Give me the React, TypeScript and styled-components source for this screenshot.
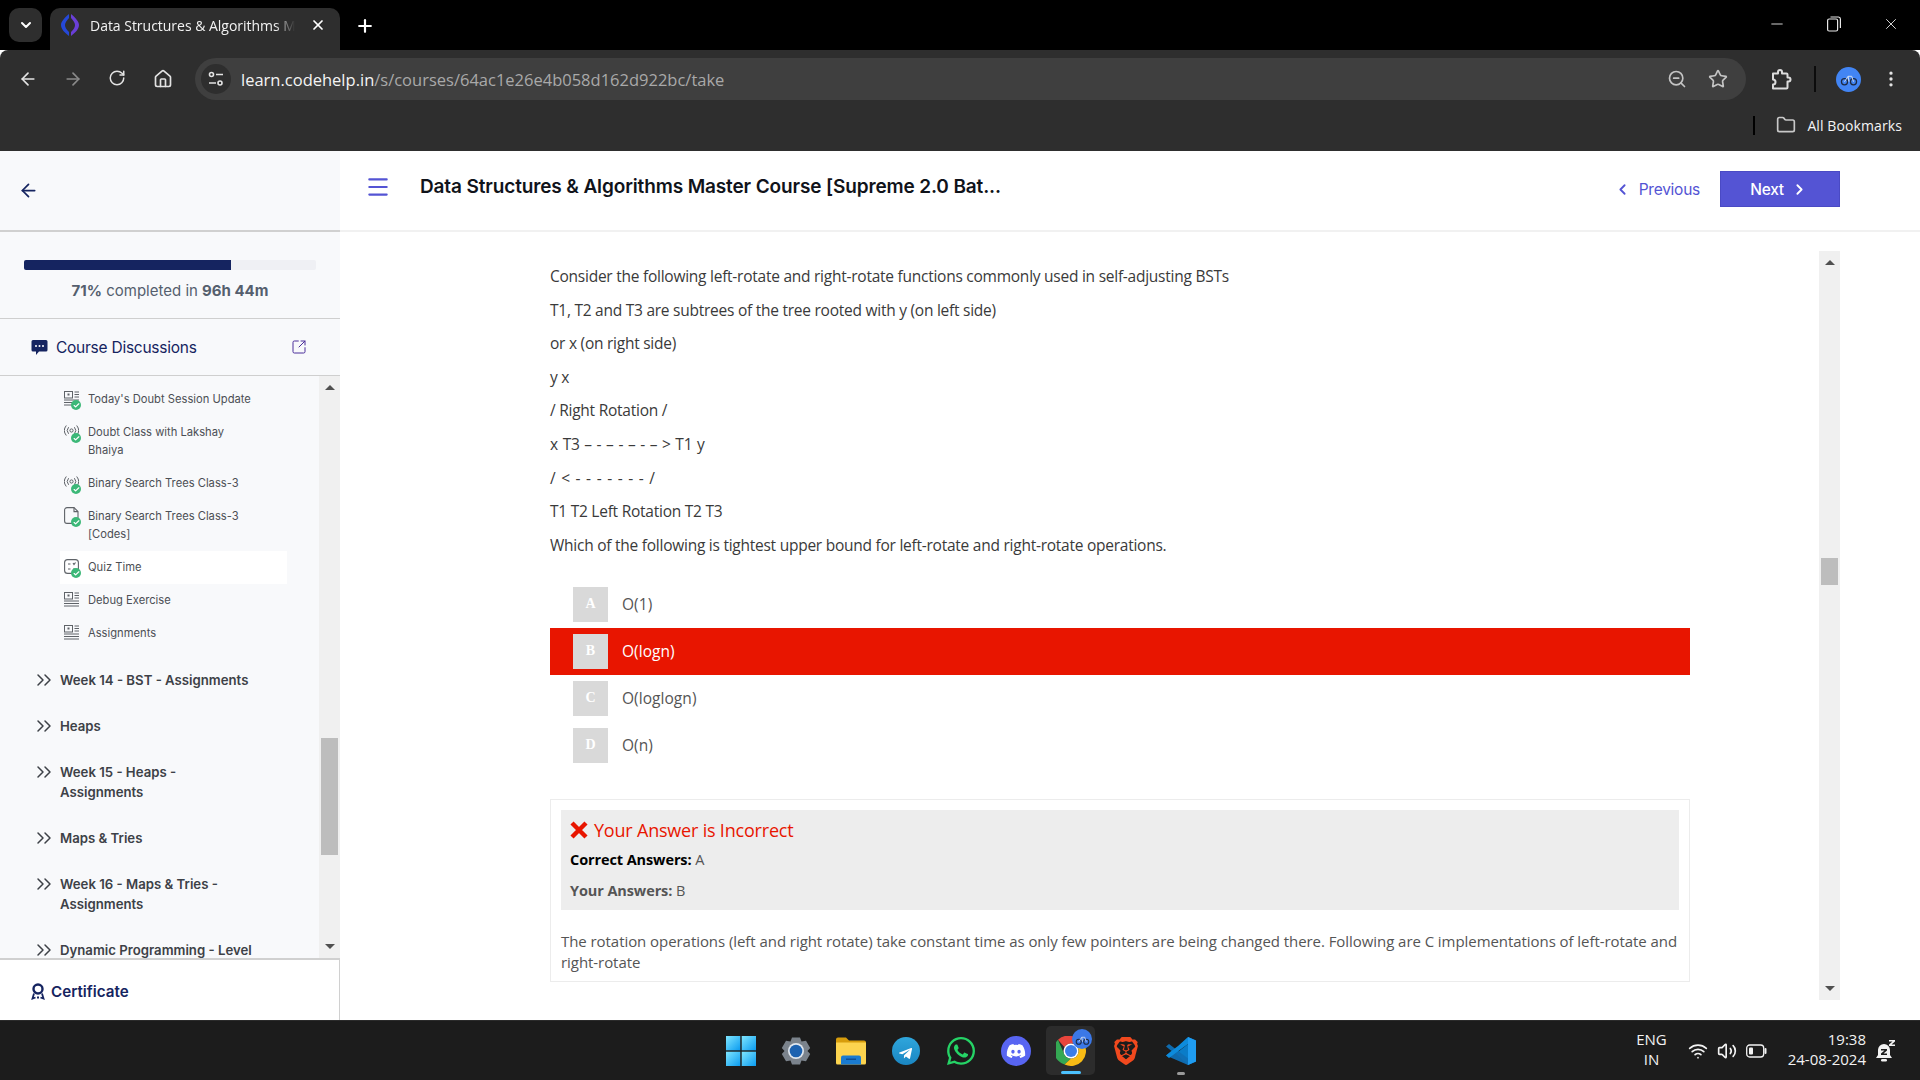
import React, { FC } from "react";
import styled, { createGlobalStyle } from "styled-components";
import { FaDiscord, FaWhatsapp, FaTelegramPlane } from "react-icons/fa";
import { SiBrave } from "react-icons/si";
import {
  ArrowLeft,
  ArrowRight,
  RotateCw,
  Home,
  ZoomOut,
  Star,
  MoreVertical,
  Folder,
  Plus,
  X,
  Minus,
  ChevronDown,
  ChevronLeft,
  ChevronRight,
  ChevronsRight,
  Menu,
  SquareArrowOutUpRight,
  Wifi,
  Volume2,
  Check,
} from "lucide-react";

const SITE_FONT = `Inter, "Liberation Sans", sans-serif`;
const UI_FONT = `"Open Sans", "Noto Sans", sans-serif`;
const NAVY = "#152460";
const PURPLE = "#5454d4";

const GlobalStyle = createGlobalStyle`
  html, body {
    margin: 0;
    padding: 0;
    width: 1920px;
    height: 1080px;
    overflow: hidden;
    background: #fff;
  }
  * { box-sizing: border-box; }
`;

const Page = styled.div`
  width: 1920px;
  height: 1080px;
  display: flex;
  flex-direction: column;
  font-family: ${UI_FONT};
`;

/* browser chrome */
const TabStrip = styled.div`
  height: 50px;
  background: #000;
  display: flex;
  align-items: flex-start;
  padding: 8px 0 0 9px;
  color: #fff;
`;

const TabMenu = styled.div`
  width: 33px;
  height: 34px;
  border-radius: 10px;
  background: #2e2e2e;
  display: flex;
  align-items: center;
  justify-content: center;
`;

const Tab = styled.div`
  margin-left: 8px;
  width: 290px;
  height: 42px;
  background: #2e2e2e;
  border-radius: 10px 10px 0 0;
  display: flex;
  align-items: center;
  padding: 0 10px 8px 10px;
`;

const TabTitle = styled.div`
  margin-left: 10px;
  width: 220px;
  font-size: 14px;
  white-space: nowrap;
  letter-spacing: -0.02px;
  color: #f2f2f2;
  mask-image: linear-gradient(to right, #000 185px, transparent 205px);
`;

const TabClose = styled.div`
  display: flex;
`;

const NewTab = styled.div`
  margin: 8px 0 0 15px;
  display: flex;
`;

const WindowControls = styled.div`
  margin: 7px 20px 0 auto;
  display: flex;
  gap: 39px;
  color: #e8e8e8;
`;

const RestoreGlyph = styled.div`
  width: 18px;
  height: 18px;
  display: flex;
  align-items: center;
  justify-content: center;
`;

const Toolbar = styled.div`
  height: 55px;
  background: #2e2e2e;
  display: flex;
  align-items: center;
  padding: 3px 12px 0 18px;
  color: #e3e3e3;
  border-radius: 8px 8px 0 0;
`;

const NavButton = styled.div<{ dim?: boolean }>`
  width: 20px;
  height: 20px;
  margin-right: 25px;
  display: flex;
  color: ${(props) => (props.dim ? "#8a8a8a" : "#e3e3e3")};
`;

const Omnibox = styled.div`
  width: 1551px;
  height: 42px;
  margin-left: -3px;
  border-radius: 21px;
  background: #3f3f3f;
  display: flex;
  align-items: center;
  padding: 0 18px 0 6px;
`;

const SiteChip = styled.div`
  width: 30px;
  height: 30px;
  border-radius: 50%;
  background: #2e2e2e;
  display: flex;
  align-items: center;
  justify-content: center;
`;

const UrlText = styled.div`
  margin-left: 10px;
  font-size: 16.5px;
  color: #a9a9a9;
  white-space: nowrap;
`;

const UrlHost = styled.span`
  color: #f4f4f4;
`;

const OmniActions = styled.div`
  margin-left: auto;
  display: flex;
  align-items: center;
  gap: 21px;
  color: #c4c4c4;
`;

const ToolActions = styled.div`
  margin-left: 22px;
  display: flex;
  align-items: center;
`;

const ToolDivider = styled.div`
  width: 2px;
  height: 26px;
  background: #0c0c0c;
  margin: 0 20px 0 22px;
`;

const Avatar = styled.div`
  width: 25px;
  height: 25px;
  border-radius: 50%;
  background: #4285f4;
  display: flex;
  align-items: center;
  justify-content: center;
  margin-right: 20px;
`;

const BookmarksBar = styled.div`
  height: 46px;
  background: #2e2e2e;
  display: flex;
  align-items: flex-start;
  justify-content: flex-end;
  padding: 4px 18px 0 0;
  color: #f4f4f4;
  font-size: 14px;
  letter-spacing: 0.1px;
`;

const BookmarkDivider = styled.div`
  width: 2px;
  height: 19px;
  background: #000;
  margin: 7px 21px 0 0;
`;

const BookmarkLabel = styled.div`
  display: flex;
  align-items: center;
  gap: 11px;
  height: 32px;
`;

/* page */
const AppBody = styled.div`
  flex: 1;
  min-height: 0;
  display: flex;
  background: #fff;
`;

const Sidebar = styled.aside`
  width: 340px;
  background: #f8f9fb;
  display: flex;
  flex-direction: column;
  font-family: ${SITE_FONT};
`;

const SideTop = styled.div`
  height: 81px;
  border-bottom: 2px solid #d0d0d0;
  display: flex;
  align-items: center;
  padding: 0 0 0 18px;
  color: ${NAVY};
`;

const ProgressBlock = styled.div`
  height: 87px;
  padding: 28px 24px 0;
  border-bottom: 1px solid #cfcfcf;
`;

const ProgressTrack = styled.div`
  height: 10px;
  background: #eff0f4;
  border-radius: 2px;
  overflow: hidden;
`;

const ProgressFill = styled.div`
  height: 100%;
  background: ${NAVY};
`;

const ProgressText = styled.div`
  margin-top: 10px;
  text-align: center;
  font-size: 15px;
  line-height: 22px;
  color: #555f6e;
  b {
    font-weight: 700;
  }
`;

const DiscussionRow = styled.div`
  height: 57px;
  border-bottom: 1px solid #cfcfcf;
  display: flex;
  align-items: center;
  padding: 0 33px 0 31px;
  color: ${NAVY};
  font-size: 15.5px;
  letter-spacing: -0.25px;
`;

const DiscussionLabel = styled.span`
  margin-left: 8px;
  flex: 1;
`;

const ListArea = styled.div`
  flex: 1;
  min-height: 0;
  display: flex;
  overflow: hidden;
`;

const CourseList = styled.div`
  flex: 1;
  min-width: 0;
  padding-top: 6.5px;
  overflow: hidden;
`;

const LessonGroup = styled.div`
  margin-bottom: 7px;
`;

const LessonRow = styled.div<{ active?: boolean }>`
  display: flex;
  align-items: flex-start;
  width: 227px;
  margin-left: 60px;
  padding: 7.5px 12px 7.5px 4px;
  background: ${(props) => (props.active ? "#fff" : "transparent")};
`;

const LessonIcon = styled.div`
  position: relative;
  width: 15px;
  height: 18px;
  flex: none;
  color: #5f6368;
`;

const CheckBadge = styled.div`
  position: absolute;
  left: 7px;
  top: 10px;
  width: 10px;
  height: 10px;
  border-radius: 50%;
  background: #3cb878;
  color: #fff;
  display: flex;
  align-items: center;
  justify-content: center;
`;

const LessonText = styled.div`
  margin-left: 9px;
  width: 168px;
  font-size: 11.2px;
  line-height: 18px;
  color: #4c4f55;
`;

const SectionRow = styled.div`
  display: flex;
  align-items: flex-start;
  padding: 13px 0 13px 36px;
  color: #3d4147;
`;

const SectionChevron = styled.div`
  width: 16px;
  height: 20px;
  flex: none;
  display: flex;
  align-items: center;
  margin-left: -4px;
  margin-right: 4px;
  svg {
    flex: none;
  }
`;

const SectionText = styled.div`
  margin-left: 8px;
  width: 196px;
  font-size: 13.2px;
  line-height: 20px;
  font-weight: 600;
`;

const ScrollTrack = styled.div`
  width: 21px;
  margin-left: auto;
  background: #f0f0f0;
  display: flex;
  flex-direction: column;
  align-items: center;
  flex: none;
  padding: 9px 0 9px;
`;

const ScrollArrow = styled.div<{ down?: boolean }>`
  width: 0;
  height: 0;
  border-left: 5px solid transparent;
  border-right: 5px solid transparent;
  ${(props) =>
    props.down
      ? "border-top: 5px solid #505050; margin-top: auto;"
      : "border-bottom: 5px solid #505050;"}
`;

const ScrollThumb = styled.div<{ offset: number; size: number }>`
  width: 17px;
  height: ${(props) => props.size}px;
  margin-top: ${(props) => props.offset}px;
  background: #bdbdbd;
`;

const CertificateRow = styled.div`
  height: 62px;
  background: #fff;
  border-top: 2px solid #d0d0d0;
  border-right: 1px solid #d0d0d0;
  display: flex;
  align-items: center;
  gap: 6px;
  padding: 2px 0 0 31px;
  color: ${NAVY};
  font-size: 15.2px;
  font-weight: 600;
`;

const Main = styled.main`
  flex: 1;
  min-width: 0;
  display: flex;
  flex-direction: column;
`;

const MainHeader = styled.header`
  height: 81px;
  border-bottom: 2px solid #f1f1f1;
  display: flex;
  align-items: center;
  padding: 0 80px 3px 25px;
  font-family: ${SITE_FONT};
`;

const MenuButton = styled.div`
  width: 26px;
  height: 26px;
  display: flex;
  color: ${PURPLE};
  margin-top: -4px;
`;

const CourseTitle = styled.h1`
  margin: -5px 0 0 29px;
  font-size: 19px;
  font-weight: 600;
  letter-spacing: -0.13px;
  color: #10131a;
`;

const PrevLink = styled.div`
  margin-left: auto;
  display: flex;
  align-items: center;
  gap: 8px;
  font-size: 15.5px;
  color: ${PURPLE};
  letter-spacing: -0.25px;
`;

const NextButton = styled.div`
  margin-left: 20px;
  width: 120px;
  height: 36px;
  background: ${PURPLE};
  border: 1px solid #4a4ac4;
  color: #fff;
  font-size: 15.5px;
  font-weight: 500;
  display: flex;
  align-items: center;
  justify-content: center;
  gap: 7px;
  letter-spacing: -0.35px;
  padding-right: 2px;
`;

const ContentRow = styled.div`
  flex: 1;
  min-height: 0;
  display: flex;
  padding: 19px 80px 20px 210px;
`;

const QuestionColumn = styled.div`
  width: 1140px;
  padding-top: 13px;
`;

const QuestionLine = styled.p<{ spread?: number }>`
  margin: 0 0 9.6px;
  font-size: 15.5px;
  line-height: 24px;
  color: #3a3a3a;
  letter-spacing: -0.25px;
  word-spacing: ${(props) => props.spread || 0}px;
`;

const OptionList = styled.div`
  margin-top: 24px;
`;

const OptionRow = styled.div<{ wrong?: boolean }>`
  height: 47px;
  padding: 6px 23px;
  display: flex;
  align-items: center;
  gap: 14px;
  font-size: 15.5px;
  letter-spacing: 0.05px;
  background: ${(props) => (props.wrong ? "#e81500" : "transparent")};
  color: ${(props) => (props.wrong ? "#fff" : "#555")};
`;

const OptionBadge = styled.div`
  width: 35px;
  height: 35px;
  background: #d9d9d9;
  color: #fff;
  font-family: "Liberation Serif", serif;
  font-weight: 700;
  font-size: 14px;
  display: flex;
  align-items: center;
  justify-content: center;
`;

const FeedbackBox = styled.div`
  margin-top: 30px;
  height: 183px;
  border: 1px solid #ececec;
  padding: 10px;
`;

const VerdictPanel = styled.div`
  height: 100px;
  background: #ededed;
  padding: 8px 9px 0;
`;

const VerdictTitle = styled.div`
  display: flex;
  align-items: center;
  gap: 6px;
  height: 24px;
  font-size: 18px;
  letter-spacing: -0.2px;
  color: #e81500;
`;

const VerdictLine = styled.div<{ muted?: boolean }>`
  margin-top: ${(props) => (props.muted ? 8 : 6)}px;
  font-size: 14.5px;
  line-height: 23px;
  letter-spacing: -0.1px;
  color: ${(props) => (props.muted ? "#555" : "#000")};
  b {
    font-weight: 700;
  }
  span {
    color: #555;
  }
`;

const Explanation = styled.p`
  margin: 21px 0 0;
  font-size: 15px;
  line-height: 21px;
  letter-spacing: -0.06px;
  color: #555;
`;

/* taskbar */
const Taskbar = styled.footer`
  height: 60px;
  background: #1c1c1c;
  border-top: 1px solid #2b2b2b;
  display: flex;
  align-items: center;
  color: #f2f2f2;
`;

const TaskIcons = styled.div`
  margin-left: 716px;
  display: flex;
  align-items: center;
`;

const TaskSlot = styled.div<{ active?: boolean }>`
  position: relative;
  width: 49px;
  height: 49px;
  margin-right: 6px;
  border-radius: 5px;
  display: flex;
  align-items: center;
  justify-content: center;
  background: ${(props) => (props.active ? "#2c2c2c" : "transparent")};
`;

const RunningMark = styled.div<{ active?: boolean }>`
  position: absolute;
  bottom: ${(props) => (props.active ? "1px" : "0")};
  left: 50%;
  transform: translateX(-50%);
  width: ${(props) => (props.active ? "20px" : "8px")};
  height: 3px;
  border-radius: 2px;
  background: ${(props) => (props.active ? "#4cc2ff" : "#9a9a9a")};
`;

const ChromeBadge = styled.div`
  position: absolute;
  top: 3px;
  right: 3px;
  width: 20px;
  height: 20px;
  border-radius: 50%;
  background: #3b78e7;
  display: flex;
  align-items: center;
  justify-content: center;
`;

const Tray = styled.div`
  margin-left: auto;
  display: flex;
  align-items: center;
  font-size: 15px;
  padding: 0 24px 3px 0;
`;

const LangBlock = styled.div`
  text-align: center;
  line-height: 20px;
  margin-right: 21px;
`;

const TrayIcons = styled.div`
  display: flex;
  align-items: center;
  gap: 9px;
  margin-top: 3px;
`;

const ClockBlock = styled.div`
  margin-left: 21px;
  text-align: right;
  line-height: 20px;
`;

const BellWrap = styled.div`
  margin: 3px 0 0 10px;
  display: flex;
`;

const Favicon: FC = () => (
  <svg width="20" height="22" viewBox="0 0 20 22">
    <path d="M9 0 C4 4 1 8 1 11 C1 15 5 19 9 22 L9 18 C6 15 5 13 5 11 C5 9 7 6 9 4 Z" fill="#2548d8" />
    <path d="M11 0 C16 4 19 8 19 11 C19 15 15 19 11 22 L11 18 C14 15 15 13 15 11 C15 9 13 6 11 4 Z" fill="#6a3fd8" />
  </svg>
);

const TuneGlyph: FC = () => (
  <svg width="16" height="16" viewBox="0 0 16 16" fill="none" stroke="#e3e3e3" strokeWidth="1.600">
    <circle cx="3.500" cy="3.500" r="2" />
    <path d="M8 3.500H15M1 12H8" />
    <circle cx="12" cy="12" r="2" />
  </svg>
);

const ExtensionGlyph: FC = () => (
  <svg width="24" height="24" viewBox="0 0 24 24" fill="none" stroke="#dcdcdc" strokeWidth="2" strokeLinejoin="round">
    <path d="M5 6.500H10V5A2 2 0 0 1 14 5V6.500H18.500A1 1 0 0 1 19.500 7.500V10.500H20.500A2 2 0 0 1 20.500 14.500H19.500V20.500A1 1 0 0 1 18.500 21.500H5V17.500A2.500 2.500 0 0 0 5 12.500Z" />
  </svg>
);

const ChatGlyph: FC = () => (
  <svg width="17" height="17" viewBox="0 0 17 17">
    <path d="M2 1H15A1.500 1.500 0 0 1 16.500 2.500V11A1.500 1.500 0 0 1 15 12.500H8L5 16V12.500H2A1.500 1.500 0 0 1 .5 11V2.500A1.500 1.500 0 0 1 2 1Z" fill={NAVY} />
    <circle cx="5" cy="7" r="1" fill="#fff" />
    <circle cx="8.500" cy="7" r="1" fill="#fff" />
    <circle cx="12" cy="7" r="1" fill="#fff" />
  </svg>
);

const CertificateGlyph: FC = () => (
  <svg width="14" height="17" viewBox="0 0 14 17" fill="none" stroke={NAVY}>
    <circle cx="7" cy="6" r="4.500" strokeWidth="2.400" />
    <path d="M3 10.500L1.500 15.500L4.500 14.500M11 10.500L12.500 15.500L9.500 14.500M6 14.500H8" strokeWidth="1.800" />
  </svg>
);

const CrossGlyph: FC = () => (
  <svg width="18" height="18" viewBox="0 0 18 18" stroke="#e81500" strokeWidth="4.400">
    <path d="M2 2L16 16M16 2L2 16" />
  </svg>
);

const Bike: FC<{ size: number }> = ({ size }) => (
  <svg width={size} height={size} viewBox="0 0 20 20" fill="none" stroke="#1d2a44" strokeWidth="1.400">
    <circle cx="5" cy="13" r="3.400" />
    <circle cx="15" cy="13" r="3.400" />
    <path d="M5 13 L9 7 H13 L15 13 M9 7 L10 13" stroke="#dfe6f2" strokeWidth="1" />
  </svg>
);

const ArticleGlyph: FC = () => (
  <svg width="15" height="15" viewBox="0 0 15 15" fill="none" stroke="currentColor" strokeWidth="1">
    <rect x="0.500" y="0.500" width="8" height="6.500" />
    <rect x="3.500" y="2.500" width="2" height="2" fill="currentColor" stroke="none" />
    <path d="M10.500 1H15M10.500 3.500H15M10.500 6H15M0 9H15M0 11.500H15M0 14H15" />
  </svg>
);

const LiveGlyph: FC = () => (
  <svg width="15" height="15" viewBox="0 0 15 15" fill="none" stroke="currentColor" strokeWidth="1">
    <circle cx="7.500" cy="6.500" r="1.600" />
    <path d="M4.600 3.200a5 5 0 0 0 0 6.600M10.400 3.200a5 5 0 0 1 0 6.600M2.300 1.500a8 8 0 0 0 0 10M12.700 1.500a8 8 0 0 1 0 10" />
  </svg>
);

const FileGlyph: FC = () => (
  <svg width="15" height="18" viewBox="0 0 15 18" fill="none" stroke="currentColor" strokeWidth="1.100">
    <path d="M3 .6H10L14 4.600V14a2.400 2.400 0 0 1-2.400 2.400H3A2.400 2.400 0 0 1 .6 14V3A2.400 2.400 0 0 1 3 .6Z" />
    <path d="M10 .6V4.600H14" />
  </svg>
);

const QuizGlyph: FC = () => (
  <svg width="15" height="15" viewBox="0 0 15 15" fill="none" stroke="currentColor" strokeWidth="1.100">
    <rect x="0.600" y="0.600" width="13.800" height="13.800" rx="3" />
    <path d="M4 5H6.500M9 4L10 5.500L11.500 3.500M4 10H6.500M9 10H11.500" />
  </svg>
);

const WindowsLogo: FC = () => (
  <svg width="30" height="30" viewBox="0 0 30 30">
    <defs>
      <linearGradient id="win" x1="0" y1="0" x2="1" y2="1">
        <stop offset="0" stopColor="#7fe6ff" />
        <stop offset="1" stopColor="#0a9bf0" />
      </linearGradient>
    </defs>
    <rect x="0" y="0" width="14.300" height="14.300" fill="url(#win)" />
    <rect x="15.700" y="0" width="14.300" height="14.300" fill="url(#win)" />
    <rect x="0" y="15.700" width="14.300" height="14.300" fill="url(#win)" />
    <rect x="15.700" y="15.700" width="14.300" height="14.300" fill="url(#win)" />
  </svg>
);

const SettingsLogo: FC = () => (
  <svg width="30" height="30" viewBox="0 0 30 30">
    <path
      d="M11 1.500H19L20.500 5.500L25 4.800L29.200 12L26.500 15L29.200 18L25 25.200L20.500 24.500L19 28.500H11L9.500 24.500L5 25.200L.8 18L3.500 15L.8 12L5 4.800L9.500 5.500Z"
      fill="#7b838c"
    />
    <circle cx="15" cy="15" r="8" fill="#dfe6ee" />
    <circle cx="15" cy="15" r="6.300" fill="#1c62b0" />
  </svg>
);

const FolderLogo: FC = () => (
  <svg width="30" height="28" viewBox="0 0 30 28">
    <path d="M0 2.500A2 2 0 0 1 2 .5H10L13 3.500H28A2 2 0 0 1 30 5.500V12H0Z" fill="#d79d0c" />
    <path d="M0 5.500H30V26A1.500 1.500 0 0 1 28.500 27.500H1.500A1.500 1.500 0 0 1 0 26Z" fill="#fcd44f" />
    <path d="M5 20.500A2 2 0 0 1 7 18.500H23A2 2 0 0 1 25 20.500V27.500H5Z" fill="#1a7bd0" />
    <rect x="10" y="21.500" width="10" height="1.500" fill="#0d4f96" />
  </svg>
);

const TelegramLogo: FC = () => (
  <svg width="28" height="28" viewBox="0 0 28 28">
    <defs>
      <linearGradient id="tg" x1="0" y1="0" x2="0" y2="1">
        <stop offset="0" stopColor="#2fa6dc" />
        <stop offset="1" stopColor="#1a86c2" />
      </linearGradient>
    </defs>
    <circle cx="14" cy="14" r="14" fill="url(#tg)" />
    <foreignObject x="6" y="7" width="15" height="15">
      <FaTelegramPlane size={15} color="#fff" />
    </foreignObject>
  </svg>
);

const DiscordLogo: FC = () => (
  <svg width="30" height="30" viewBox="0 0 30 30">
    <circle cx="15" cy="15" r="15" fill="#5865f2" />
    <foreignObject x="5" y="5" width="20" height="20">
      <FaDiscord size={20} color="#fff" />
    </foreignObject>
  </svg>
);

const ChromeLogo: FC = () => (
  <svg width="30" height="30" viewBox="0 0 30 30">
    <path d="M15 0A15 15 0 0 1 28 7.500H15A7.500 7.500 0 0 0 8.500 11.250L2 3.750A15 15 0 0 1 15 0Z" fill="#e8453c" />
    <path d="M2 3.750L8.500 18.750A7.500 7.500 0 0 0 15 22.500L8.500 28.500A15 15 0 0 1 2 3.750Z" fill="#34a853" />
    <path d="M28 7.500A15 15 0 0 1 8.500 28.500L15 22.500A7.500 7.500 0 0 0 21.500 11.250Z" fill="#f9bc15" />
    <circle cx="15" cy="15" r="7.500" fill="#fff" />
    <circle cx="15" cy="15" r="6" fill="#3b7de8" />
  </svg>
);

const VsCodeLogo: FC = () => (
  <svg width="30" height="30" viewBox="0 0 30 30">
    <path d="M22 1L30 4.500V25.500L22 29L10 17.500L22 8Z" fill="#0a7cc8" />
    <path d="M22 1V29L30 25.500V4.500Z" fill="#1f9cf0" />
    <path d="M0 10.500L3 8L22 22.500V29L0 19.500L5.500 15Z" fill="#0f6fb5" opacity="0.95" />
    <path d="M0 19.500L3 22L22 8V1L12 10L5.500 15Z" fill="#0d8bdc" />
  </svg>
);

const BatteryGlyph: FC = () => (
  <svg width="21" height="14" viewBox="0 0 21 14" fill="none" stroke="#f2f2f2" strokeWidth="1.300">
    <rect x="0.700" y="1" width="17" height="12" rx="3" />
    <rect x="3" y="3.500" width="4" height="7" rx="1" fill="#f2f2f2" stroke="none" />
    <path d="M19.500 5V9" strokeWidth="2" strokeLinecap="round" />
  </svg>
);

const SnoozeBell: FC = () => (
  <svg width="20" height="24" viewBox="0 0 20 24" fill="#f2f2f2">
    <path d="M8 5A6 6 0 0 1 14 11V16L16 19H0L2 16V11A6 6 0 0 1 8 5Z" />
    <rect x="5" y="20" width="6" height="2.500" rx="1.200" />
    <path d="M5 10H11V11.500L7.500 14.500H11V16H5V14.500L8.500 11.500H5Z" fill="#1c1c1c" />
    <path d="M13 1H19V2.500L15.500 5.500H19V7H13V5.500L16.500 2.500H13Z" />
  </svg>
);

const Scrollbar: FC<{ offset: number; size: number }> = ({ offset, size }) => (
  <ScrollTrack>
    <ScrollArrow />
    <ScrollThumb offset={offset} size={size} />
    <ScrollArrow down />
  </ScrollTrack>
);

type Lesson = { icon: "article" | "live" | "file" | "quiz"; title: string; done?: boolean; active?: boolean };

const lessons: Lesson[] = [
  { icon: "article", title: "Today's Doubt Session Update", done: true },
  { icon: "live", title: "Doubt Class with Lakshay Bhaiya", done: true },
  { icon: "live", title: "Binary Search Trees Class-3", done: true },
  { icon: "file", title: "Binary Search Trees Class-3 [Codes]", done: true },
  { icon: "quiz", title: "Quiz Time", done: true, active: true },
  { icon: "article", title: "Debug Exercise" },
  { icon: "article", title: "Assignments" },
];

const sections = [
  "Week 14 - BST - Assignments",
  "Heaps",
  "Week 15 - Heaps - Assignments",
  "Maps & Tries",
  "Week 16 - Maps & Tries - Assignments",
  "Dynamic Programming - Level",
];

const questionLines: { text: string; spread?: number }[] = [
  { text: "Consider the following left-rotate and right-rotate functions commonly used in self-adjusting BSTs" },
  { text: "T1, T2 and T3 are subtrees of the tree rooted with y (on left side)" },
  { text: "or x (on right side)" },
  { text: "y x" },
  { text: "/ Right Rotation /" },
  { text: "x T3 – - – - – - – > T1 y", spread: 1 },
  { text: "/ < - - - - - - - /", spread: 2 },
  { text: "T1 T2 Left Rotation T2 T3" },
  { text: "Which of the following is tightest upper bound for left-rotate and right-rotate operations." },
];

const options = [
  { key: "A", text: "O(1)" },
  { key: "B", text: "O(logn)", wrong: true },
  { key: "C", text: "O(loglogn)" },
  { key: "D", text: "O(n)" },
];

const lessonGlyph = (icon: Lesson["icon"]) => {
  if (icon === "live") return <LiveGlyph />;
  if (icon === "file") return <FileGlyph />;
  if (icon === "quiz") return <QuizGlyph />;
  return <ArticleGlyph />;
};

const App: FC = () => {
  return (
    <Page>
      <GlobalStyle />
      <TabStrip>
        <TabMenu>
          <ChevronDown size={16} strokeWidth={3} />
        </TabMenu>
        <Tab>
          <Favicon />
          <TabTitle>Data Structures &amp; Algorithms M</TabTitle>
          <TabClose>
            <X size={16} strokeWidth={2.6} />
          </TabClose>
        </Tab>
        <NewTab>
          <Plus size={20} strokeWidth={2.6} />
        </NewTab>
        <WindowControls>
          <Minus size={18} strokeWidth={1.2} />
          <RestoreGlyph>
            <svg width="14" height="16" viewBox="0 0 14 16" fill="none" stroke="currentColor" strokeWidth="1.200">
              <rect x="0.600" y="3" width="10" height="12" rx="1.500" />
              <path d="M3.500 1H11.500A2 2 0 0 1 13.400 3V12" />
            </svg>
          </RestoreGlyph>
          <X size={18} strokeWidth={1.2} />
        </WindowControls>
      </TabStrip>

      <Toolbar>
        <NavButton>
          <ArrowLeft size={20} />
        </NavButton>
        <NavButton dim>
          <ArrowRight size={20} />
        </NavButton>
        <NavButton>
          <RotateCw size={18} />
        </NavButton>
        <NavButton>
          <Home size={20} />
        </NavButton>
        <Omnibox>
          <SiteChip>
            <TuneGlyph />
          </SiteChip>
          <UrlText>
            <UrlHost>learn.codehelp.in</UrlHost>/s/courses/64ac1e26e4b058d162d922bc/take
          </UrlText>
          <OmniActions>
            <ZoomOut size={20} />
            <Star size={20} />
          </OmniActions>
        </Omnibox>
        <ToolActions>
          <ExtensionGlyph />
          <ToolDivider />
          <Avatar>
            <Bike size={18} />
          </Avatar>
          <MoreVertical size={20} />
        </ToolActions>
      </Toolbar>

      <BookmarksBar>
        <BookmarkDivider />
        <BookmarkLabel>
          <Folder size={20} color="#c8c8c8" />
          All Bookmarks
        </BookmarkLabel>
      </BookmarksBar>

      <AppBody>
        <Sidebar>
          <SideTop>
            <ArrowLeft size={21} />
          </SideTop>
          <ProgressBlock>
            <ProgressTrack>
              <ProgressFill style={{ width: "71%" }} />
            </ProgressTrack>
            <ProgressText>
              <b>71%</b> completed in <b>96h 44m</b>
            </ProgressText>
          </ProgressBlock>
          <DiscussionRow>
            <ChatGlyph />
            <DiscussionLabel>Course Discussions</DiscussionLabel>
            <SquareArrowOutUpRight size={16} color="#4b2e9a" strokeWidth={1.5} />
          </DiscussionRow>
          <ListArea>
            <CourseList>
              <LessonGroup>
                {lessons.map((lesson) => (
                  <LessonRow key={lesson.title} active={lesson.active}>
                    <LessonIcon>
                      {lessonGlyph(lesson.icon)}
                      {lesson.done && (
                        <CheckBadge>
                          <Check size={7} strokeWidth={4} />
                        </CheckBadge>
                      )}
                    </LessonIcon>
                    <LessonText>{lesson.title}</LessonText>
                  </LessonRow>
                ))}
              </LessonGroup>
              {sections.map((section) => (
                <SectionRow key={section}>
                  <SectionChevron>
                    <ChevronsRight size={24} strokeWidth={1.5} />
                  </SectionChevron>
                  <SectionText>{section}</SectionText>
                </SectionRow>
              ))}
            </CourseList>
            <Scrollbar offset={348} size={117} />
          </ListArea>
          <CertificateRow>
            <CertificateGlyph />
            Certificate
          </CertificateRow>
        </Sidebar>

        <Main>
          <MainHeader>
            <MenuButton>
              <Menu size={26} strokeWidth={2} />
            </MenuButton>
            <CourseTitle>Data Structures &amp; Algorithms Master Course [Supreme 2.0 Bat...</CourseTitle>
            <PrevLink>
              <ChevronLeft size={17} strokeWidth={2.6} />
              Previous
            </PrevLink>
            <NextButton>
              Next
              <ChevronRight size={17} strokeWidth={2.6} />
            </NextButton>
          </MainHeader>
          <ContentRow>
            <QuestionColumn>
              {questionLines.map((line) => (
                <QuestionLine key={line.text} spread={line.spread}>
                  {line.text}
                </QuestionLine>
              ))}
              <OptionList>
                {options.map((option) => (
                  <OptionRow key={option.key} wrong={option.wrong}>
                    <OptionBadge>{option.key}</OptionBadge>
                    {option.text}
                  </OptionRow>
                ))}
              </OptionList>
              <FeedbackBox>
                <VerdictPanel>
                  <VerdictTitle>
                    <CrossGlyph />
                    Your Answer is Incorrect
                  </VerdictTitle>
                  <VerdictLine>
                    <b>Correct Answers:</b> <span>A</span>
                  </VerdictLine>
                  <VerdictLine muted>
                    <b>Your Answers:</b> B
                  </VerdictLine>
                </VerdictPanel>
                <Explanation>
                  The rotation operations (left and right rotate) take constant time as only few pointers are being
                  changed there. Following are C implementations of left-rotate and right-rotate
                </Explanation>
              </FeedbackBox>
            </QuestionColumn>
            <Scrollbar offset={293} size={27} />
          </ContentRow>
        </Main>
      </AppBody>

      <Taskbar>
        <TaskIcons>
          <TaskSlot>
            <WindowsLogo />
          </TaskSlot>
          <TaskSlot>
            <SettingsLogo />
          </TaskSlot>
          <TaskSlot>
            <FolderLogo />
          </TaskSlot>
          <TaskSlot>
            <TelegramLogo />
          </TaskSlot>
          <TaskSlot>
            <FaWhatsapp size={32} color="#25d366" />
          </TaskSlot>
          <TaskSlot>
            <DiscordLogo />
          </TaskSlot>
          <TaskSlot active>
            <ChromeLogo />
            <ChromeBadge>
              <Bike size={15} />
            </ChromeBadge>
            <RunningMark active />
          </TaskSlot>
          <TaskSlot>
            <SiBrave size={28} color="#f1491e" />
          </TaskSlot>
          <TaskSlot>
            <VsCodeLogo />
            <RunningMark />
          </TaskSlot>
        </TaskIcons>
        <Tray>
          <LangBlock>
            ENG
            <br />
            IN
          </LangBlock>
          <TrayIcons>
            <Wifi size={20} />
            <Volume2 size={20} />
            <BatteryGlyph />
          </TrayIcons>
          <ClockBlock>
            19:38
            <br />
            24-08-2024
          </ClockBlock>
          <BellWrap>
            <SnoozeBell />
          </BellWrap>
        </Tray>
      </Taskbar>
    </Page>
  );
};

export default App;
